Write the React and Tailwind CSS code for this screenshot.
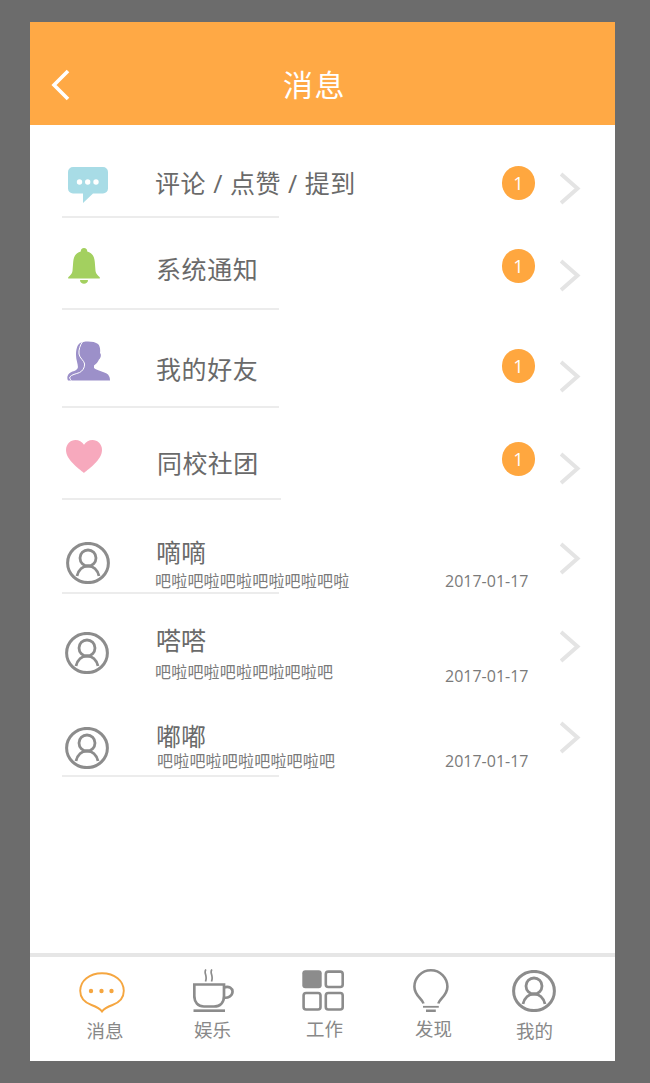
import React from 'react';

const FONT = "font-['Open_Sans','Noto_Sans_CJK_SC',sans-serif]";

const Bubble = () => (
  <svg width="40" height="36" viewBox="0 0 40 36" className="block">
    <path d="M5 0H35A5 5 0 0 1 40 5V21.5A5 5 0 0 1 35 26.5H25L15 36V26.5H5A5 5 0 0 1 0 21.5V5A5 5 0 0 1 5 0Z" fill="#a8dce6" />
    <circle cx="11.5" cy="15" r="2.7" fill="#fff" />
    <circle cx="19.7" cy="15" r="2.7" fill="#fff" />
    <circle cx="28" cy="15" r="2.7" fill="#fff" />
  </svg>
);

const Bell = () => (
  <svg width="32" height="36" viewBox="0 0 32 36" className="block">
    <path d="M16 0A3.2 3.2 0 0 1 19.2 3.6C24.5 5 26.5 9 26.8 14L27.5 23C27.8 26 30 27.5 31.8 29.2V30.5H0.2V29.2C2 27.5 4.2 26 4.5 23L5.2 14C5.5 9 7.5 5 12.8 3.6A3.2 3.2 0 0 1 16 0Z" fill="#a3d05f" />
    <path d="M12 32H20C20 34.5 18 35.8 16 35.8S12 34.5 12 32Z" fill="#a3d05f" />
  </svg>
);

const Friend = () => (
  <svg width="43" height="40" viewBox="0 0 43 40" className="block">
    <path d="M13 2C16 0 27 -0.5 31 3C33 5 33.5 9 33 12C34.5 13 34 17 32 18.5C31 21 29 23 27 24.5V27C30 30 38 30.5 41 33.5C42.5 35.5 43 37 43 39.5H1C-0.5 37 0.5 33 3.5 31.5C6 30 9 30 10.5 27.5C12 25 9 20 9 14C9 9 10 4 13 2Z" fill="#9c90c9" />
    <path d="M16 0C13 4 11.5 9 12 13C12.5 17 17.5 20 17.6 23C17.7 27 15.5 30 12.6 31.5C9 33 4.5 33.5 2.8 36C2.5 37.5 3.5 38.5 4.3 39.5" fill="none" stroke="#fff" strokeWidth="1" />
  </svg>
);

const Heart = () => (
  <svg width="36" height="33" viewBox="0 0 36 33" className="block">
    <path d="M18 33C13 28.5 0 20 0 10C0 4 4.5 0 9.5 0C13 0 16 1.8 18 4.8C20 1.8 23 0 26.5 0C31.5 0 36 4 36 10C36 20 23 28.5 18 33Z" fill="#f7a9bd" />
  </svg>
);

const Avatar = () => (
  <svg width="44" height="42" viewBox="0 0 44 42" className="block">
    <ellipse cx="22" cy="21" rx="20.4" ry="19.6" fill="none" stroke="#8c8c8c" strokeWidth="3" />
    <ellipse cx="22" cy="16" rx="8" ry="8" fill="none" stroke="#8c8c8c" strokeWidth="2.8" />
    <path d="M11 34C12.5 27.5 17 24 22 24C27 24 31.5 27.5 33 34" fill="none" stroke="#8c8c8c" strokeWidth="2.8" />
  </svg>
);

const Chevron = () => (
  <svg width="21" height="33" viewBox="0 0 21 33" className="block">
    <path d="M1 2L17.5 16.5L1 31" fill="none" stroke="#e4e4e4" strokeWidth="4" />
  </svg>
);

const Badge = () => (
  <div className="flex h-[34px] w-[33px] items-center justify-center rounded-full bg-[#ffa73f] text-[18px] leading-none text-white">1</div>
);

const MenuRow = ({ rowCls, icon, iconCls, text, textCls, badgeCls, chevCls, lineCls = 'w-[217px]' }) => (
  <div className={`flex flex-col ${rowCls}`}>
    <div className="grid flex-1 grid-cols-[125px_347px_58px_1fr]">
      <div className={iconCls}>{icon}</div>
      <div className={`text-[25px] leading-[30px] text-[#6a6a6a] ${textCls}`}>{text}</div>
      <div className={badgeCls}><Badge /></div>
      <div className={chevCls}><Chevron /></div>
    </div>
    <div className={`ml-[32px] h-[2px] bg-[#ececec] ${lineCls}`} />
  </div>
);

const MessageRow = ({ rowCls, iconCls, name, nameCls, sub, subCls, dateCls, chevCls, lineCls = 'w-[217px]' }) => (
  <div className={`flex flex-col ${rowCls}`}>
    <div className="grid flex-1 grid-cols-[125px_347px_58px_1fr]">
      <div className={iconCls}><Avatar /></div>
      <div className="flex">
        <div className="w-[290px] shrink-0">
          <div className={`ml-px text-[25px] leading-[28px] text-[#6a6a6a] ${nameCls}`}>{name}</div>
          <div className={`text-[16px] leading-[20px] tracking-[0.2px] text-[#7a7a7a] ${subCls}`}>{sub}</div>
        </div>
        <div className={`whitespace-nowrap text-[16px] leading-[20px] text-[#7a7a7a] ${dateCls}`}>2017-01-17</div>
      </div>
      <div />
      <div className={chevCls}><Chevron /></div>
    </div>
    <div className={`ml-[32px] h-[2px] bg-[#ececec] ${lineCls}`} />
  </div>
);

const NavItem = ({ itemCls, iconCls = '', icon, label, labelCls }) => (
  <div className={`flex w-[60px] flex-col items-center ${itemCls}`}>
    <div className={`flex h-[43px] items-center justify-center ${iconCls}`}>{icon}</div>
    <div className={`text-[18.5px] leading-[24px] text-[#888] ${labelCls}`}>{label}</div>
  </div>
);

export default function App() {
  return (
    <div className={`min-h-[1083px] bg-[#6c6c6c] pl-[30px] pt-[22px] ${FONT}`}>
      <div className="flex h-[1039px] w-[585px] flex-col bg-white">
        <header className="flex h-[103px] shrink-0 items-center bg-[#ffa945] pl-[20px] pt-[22px]">
          <svg width="22" height="32" viewBox="0 0 22 32" className="block">
            <path d="M18 2L4 16L18 30" fill="none" stroke="#fff" strokeWidth="3.6" />
          </svg>
          <h1 className="ml-[211px] text-[30px] leading-[40px] tracking-[1.5px] text-white">消息</h1>
        </header>

        <main className="flex-1">
          <MenuRow rowCls="h-[93px]" icon={<Bubble />} iconCls="ml-[38px] mt-[42px]" text="评论 / 点赞 / 提到" textCls="mt-[43px] tracking-[0.55px]" badgeCls="mt-[41px]" chevCls="mt-[47px]" />
          <MenuRow rowCls="h-[92px]" icon={<Bell />} iconCls="ml-[38px] mt-[30px]" text="系统通知" textCls="ml-px mt-[36px] tracking-[0.6px]" badgeCls="mt-[31px]" chevCls="mt-[41px]" />
          <MenuRow rowCls="h-[98px]" icon={<Friend />} iconCls="ml-[37px] mt-[31px]" text="我的好友" textCls="ml-px mt-[44px] tracking-[0.6px]" badgeCls="mt-[39px]" chevCls="mt-[50px]" />
          <MenuRow rowCls="h-[92px]" icon={<Heart />} iconCls="ml-[36px] mt-[32px]" text="同校社团" textCls="ml-[2px] mt-[40px] tracking-[0.4px]" badgeCls="mt-[34px]" chevCls="mt-[44px]" lineCls="w-[219px]" />
          <MessageRow rowCls="h-[94px]" iconCls="ml-[36px] mt-[42px]" name="嘀嘀" nameCls="mt-[38px]" sub="吧啦吧啦吧啦吧啦吧啦吧啦" subCls="mt-[5px]" dateCls="mt-[71px]" chevCls="mt-[42px]" />
          <MessageRow rowCls="h-[91px]" iconCls="ml-[35px] mt-[38px]" name="嗒嗒" nameCls="mt-[32px]" sub="吧啦吧啦吧啦吧啦吧啦吧" subCls="mt-[8px]" dateCls="mt-[72px]" chevCls="mt-[36px]" />
          <MessageRow rowCls="h-[92px]" iconCls="ml-[35px] mt-[42px]" name="嘟嘟" nameCls="mt-[37px]" sub="吧啦吧啦吧啦吧啦吧啦吧" subCls="ml-[2px] mt-px" dateCls="mt-[66px]" chevCls="mt-[36px]" />
        </main>

        <nav className="flex h-[108px] shrink-0 border-t-4 border-[#e6e6e6] pt-[12px]">
          <NavItem
            itemCls="ml-[45px]"
            iconCls="mr-[7px] mt-[2px]"
            label="消息"
            labelCls="mt-[5px]"
            icon={
              <svg width="46" height="41" viewBox="0 0 46 41">
                <path d="M23 39.5C21 36.5 17.5 34.8 12.5 33C5.5 30.5 1.2 25.5 1.2 18.8C1.2 8.5 10.5 1.2 23 1.2C35.5 1.2 44.8 8.5 44.8 18.8C44.8 25.5 40.5 30.5 33.5 33C28.5 34.8 25 36.5 23 39.5Z" fill="none" stroke="#f5a640" strokeWidth="1.9" />
                <circle cx="12" cy="19" r="2.2" fill="#f5a640" />
                <circle cx="22.5" cy="19" r="2.2" fill="#f5a640" />
                <circle cx="32.5" cy="19" r="2.2" fill="#f5a640" />
              </svg>
            }
          />
          <NavItem
            itemCls="ml-[47.5px]"
            iconCls="ml-px"
            label="娱乐"
            labelCls="mt-[6px]"
            icon={
              <svg width="41" height="43" viewBox="0 0 41 43">
                <g fill="none" stroke="#8c8c8c" strokeWidth="1.7">
                  <path d="M13 0.5C10 3.5 15 6.5 12.5 12.5" />
                  <path d="M19 0.5C16 3.5 21 6.5 18.5 12.5" />
                </g>
                <g fill="none" stroke="#8c8c8c" strokeWidth="2.7">
                  <path d="M1.3 15.5H31V27C31 33.5 27 37.5 21 37.5H11C5 37.5 1.3 33.5 1.3 27Z" />
                  <path d="M31 18.5C36 16.5 39.8 19.5 39.5 23C39.2 27 35 29.5 30.5 28.5" />
                  <path d="M0.5 41.7H32" />
                </g>
              </svg>
            }
          />
          <NavItem
            itemCls="ml-[52px]"
            iconCls="mr-[3px]"
            label="工作"
            labelCls="mt-[5px]"
            icon={
              <svg width="42" height="41" viewBox="0 0 42 41">
                <rect x="0.3" y="0.3" width="19.4" height="18" rx="3" fill="#8c8c8c" />
                <g fill="none" stroke="#8c8c8c" strokeWidth="2.6">
                  <rect x="23.8" y="1.6" width="16.9" height="15.4" rx="2.5" />
                  <rect x="1.6" y="23" width="16.9" height="16.5" rx="2.5" />
                  <rect x="23.8" y="23" width="16.9" height="16.5" rx="2.5" />
                </g>
              </svg>
            }
          />
          <NavItem
            itemCls="ml-[49px]"
            iconCls="mr-[5px]"
            label="发现"
            labelCls="mt-[5px]"
            icon={
              <svg width="36" height="43" viewBox="0 0 36 43">
                <g fill="none" stroke="#8c8c8c" strokeWidth="2.6">
                  <path d="M10.5 34.5C9 29.5 1.4 26.5 1.4 17.8A16.5 16.5 0 0 1 34.4 17.8C34.4 26.5 26.8 29.5 25.3 34.5" />
                  <path d="M10 37.8H25.8" strokeWidth="1.8" />
                  <path d="M13 41.8H22.8" />
                </g>
              </svg>
            }
          />
          <NavItem
            itemCls="ml-[41px]"
            iconCls="mr-px"
            label="我的"
            labelCls="mt-[7px]"
            icon={<Avatar />}
          />
        </nav>
      </div>
    </div>
  );
}
